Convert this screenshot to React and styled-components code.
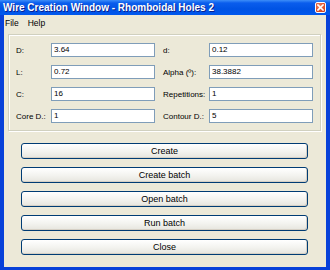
import styled, { createGlobalStyle } from "styled-components";

const GlobalStyle = createGlobalStyle`
  html, body {
    margin: 0;
    padding: 0;
    background: #ece9d8;
  }
  * {
    box-sizing: border-box;
  }
`;

const fields = [
  ["D:", "3.64", "d:", "0.12"],
  ["L:", "0.72", "Alpha (º):", "38.3882"],
  ["C:", "16", "Repetitions:", "1"],
  ["Core D.:", "1", "Contour D.:", "5"],
];

const actions = ["Create", "Create batch", "Open batch", "Run batch", "Close"];

export default function App() {
  return (
    <Window>
      <GlobalStyle />
      <TitleBar>
        <Title>Wire Creation Window - Rhomboidal Holes 2</Title>
        <CloseBox>
          <svg width="7" height="7" viewBox="0 0 7 7">
            <path d="M1 1L6 6M6 1L1 6" stroke="#fff" strokeWidth="1.6" strokeLinecap="square" />
          </svg>
        </CloseBox>
      </TitleBar>
      <Frame>
        <MenuBar>
          <MenuItem>File</MenuItem>
          <MenuItem>Help</MenuItem>
        </MenuBar>
        <GroupBox>
          <FormGrid>
            {fields.map((row) => (
              <Row key={row[0]}>
                <Label>{row[0]}</Label>
                <Field>{row[1]}</Field>
                <Label $right>{row[2]}</Label>
                <Field>{row[3]}</Field>
              </Row>
            ))}
          </FormGrid>
        </GroupBox>
        <ButtonList>
          {actions.map((a) => (
            <Button key={a}>{a}</Button>
          ))}
        </ButtonList>
      </Frame>
    </Window>
  );
}

const Window = styled.div`
  width: 330px;
  height: 270px;
  display: flex;
  flex-direction: column;
  font-family: "Liberation Sans", Arial, sans-serif;
  background: #0841d9;
`;

const TitleBar = styled.div`
  height: 15px;
  flex: none;
  display: flex;
  align-items: center;
  justify-content: space-between;
  padding: 0 4px 0 3px;
  background: linear-gradient(
    to bottom,
    #3d8ef8 0%,
    #0a5ded 20%,
    #0053e4 60%,
    #0058ee 100%
  );
`;

const Title = styled.span`
  color: #ffffff;
  font-weight: bold;
  font-size: 10px;
  text-shadow: 1px 1px 0 #0a1e8c;
  white-space: nowrap;
`;

const CloseBox = styled.div`
  width: 11px;
  height: 11px;
  border: 1px solid #ffffff;
  border-radius: 2px;
  background: radial-gradient(circle at 40% 35%, #f08a6a 0%, #e0502a 60%, #c0381c 100%);
  display: flex;
  align-items: center;
  justify-content: center;
`;

const Frame = styled.div`
  flex: 1;
  margin: 0 4px 3px 4px;
  background: #ece9d8;
  display: flex;
  flex-direction: column;
`;

const MenuBar = styled.div`
  height: 16px;
  display: flex;
  align-items: center;
  gap: 9px;
  padding-left: 1px;
`;

const MenuItem = styled.span`
  font-size: 8.5px;
  color: #000;
`;

const GroupBox = styled.div`
  margin: 3px 5px 0 4px;
  height: 97px;
  border: 1px solid #d0d0bf;
  box-shadow: inset 1px 1px 0 #ffffff, 1px 1px 0 #ffffff;
  padding: 8px 0 0 7px;
`;

const FormGrid = styled.div`
  display: grid;
  grid-template-rows: repeat(4, 14px);
  row-gap: 8px;
`;

const Row = styled.div`
  display: grid;
  grid-template-columns: 35px 104px 54px 104px;
  align-items: center;
`;

const Label = styled.span`
  font-size: 8px;
  color: #000;
  white-space: nowrap;
  padding-left: ${({ $right }) => ($right ? "8px" : "0")};
`;

const Field = styled.div`
  height: 14px;
  background: #ffffff;
  border: 1px solid #7f9db9;
  font-size: 8px;
  line-height: 12px;
  padding-left: 2px;
  color: #000;
`;

const ButtonList = styled.div`
  display: flex;
  flex-direction: column;
  gap: 8px;
  padding: 12px 18px 0 17px;
`;

const Button = styled.div`
  height: 16px;
  border: 1px solid #003c74;
  border-radius: 3px;
  background: linear-gradient(to bottom, #ffffff 0%, #f4f4f0 50%, #e6e5de 100%);
  box-shadow: inset -1px -1px 0 #d6d0c5;
  font-size: 9px;
  line-height: 14px;
  text-align: center;
  color: #000;
`;
